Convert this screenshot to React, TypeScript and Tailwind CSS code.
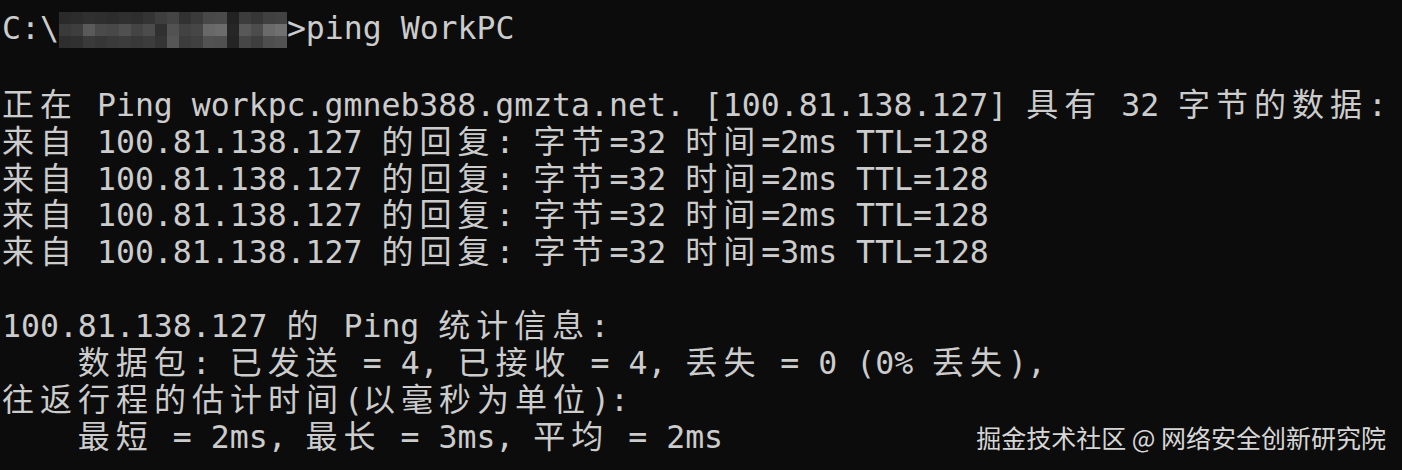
import React from 'react';

// terminal grid: one cell = 19px, wide (CJK) chars take two cells
const WIDE = /[\u2e80-\u9fff\uf900-\ufaff\uff00-\uffef\u3000-\u303f]/;

const LINES = [
  '',
  '正在 Ping workpc.gmneb388.gmzta.net. [100.81.138.127] 具有 32 字节的数据:',
  '来自 100.81.138.127 的回复: 字节=32 时间=2ms TTL=128',
  '来自 100.81.138.127 的回复: 字节=32 时间=2ms TTL=128',
  '来自 100.81.138.127 的回复: 字节=32 时间=2ms TTL=128',
  '来自 100.81.138.127 的回复: 字节=32 时间=3ms TTL=128',
  '',
  '100.81.138.127 的 Ping 统计信息:',
  '    数据包: 已发送 = 4, 已接收 = 4, 丢失 = 0 (0% 丢失),',
  '往返行程的估计时间(以毫秒为单位):',
  '    最短 = 2ms, 最长 = 3ms, 平均 = 2ms',
];

// pixelated path in the prompt (top, middle, bottom gray per column)
const MOSAIC = [
  ['#2a2a2a', '#3a3a3a', '#2e2e2e'],
  ['#2c2c2c', '#3e3e3e', '#303030'],
  ['#303030', '#5a5a5a', '#3a3a3a'],
  ['#2e2e2e', '#4a4a4a', '#363636'],
  ['#2c2c2c', '#484848', '#3a3a3a'],
  ['#303030', '#505050', '#3c3c3c'],
  ['#2e2e2e', '#444444', '#383838'],
  ['#343434', '#4c4c4c', '#3c3c3c'],
  ['#3e3e3e', '#303030', '#343434'],
  ['#444444', '#525252', '#565656'],
  ['#323232', '#424242', '#3c3c3c'],
  ['#3a3a3a', '#464646', '#404040'],
  ['#484848', '#686868', '#525252'],
  ['#4a4a4a', '#6c6c6c', '#505050'],
  ['#222222', '#262626', '#242424'],
  ['#3c3c3c', '#585858', '#464646'],
  ['#363636', '#4c4c4c', '#3e3e3e'],
  ['#404040', '#6a6a6a', '#4e4e4e'],
  ['#424242', '#707070', '#525252'],
];

function split(text: string) {
  const parts: { wide: boolean; s: string }[] = [];
  let run = '';
  for (const ch of Array.from(text)) {
    if (WIDE.test(ch)) {
      if (run) parts.push({ wide: false, s: run });
      run = '';
      parts.push({ wide: true, s: ch });
    } else {
      run += ch;
    }
  }
  if (run) parts.push({ wide: false, s: run });
  return parts;
}

function Line({ text }: { text: string }) {
  return (
    <div className="flex h-[36.9px] items-baseline whitespace-pre">
      {split(text).map((p, i) =>
        p.wide ? (
          <span
            key={i}
            className="inline-block w-[38px] text-left font-['Noto_Sans_CJK_SC',sans-serif] text-[32px] leading-[36.9px]"
          >
            {p.s}
          </span>
        ) : (
          <span key={i}>{p.s}</span>
        )
      )}
    </div>
  );
}

function Mosaic() {
  return (
    <svg width="228" height="36" viewBox="0 0 228 36" className="mt-[2px] self-start">
      {MOSAIC.map((c, i) => (
        <g key={i}>
          <rect x={i * 12} y={0} width={12} height={12} fill={c[0]} />
          <rect x={i * 12} y={12} width={12} height={12} fill={c[1]} />
          <rect x={i * 12} y={24} width={12} height={12} fill={c[2]} />
        </g>
      ))}
    </svg>
  );
}

export default function App() {
  return (
    <div className="relative h-[470px] w-[1402px] overflow-hidden bg-[#0c0c0c] text-[#cccccc]">
      <div className="pl-[2px] pt-[10px] font-['DejaVu_Sans_Mono',monospace] text-[31.5px] leading-[36.9px]">
        <div className="flex h-[36.9px] items-baseline whitespace-pre">
          <span>C:\</span>
          <Mosaic />
          <span>&gt;ping WorkPC</span>
        </div>
        {LINES.map((l, i) => (
          <Line key={i} text={l} />
        ))}
      </div>

      <div className="absolute right-[16px] top-[425px] font-['Noto_Sans_CJK_SC',sans-serif] text-[25px] leading-none text-[#d6d6d6]">
        掘金技术社区 @ 网络安全创新研究院
      </div>
    </div>
  );
}
